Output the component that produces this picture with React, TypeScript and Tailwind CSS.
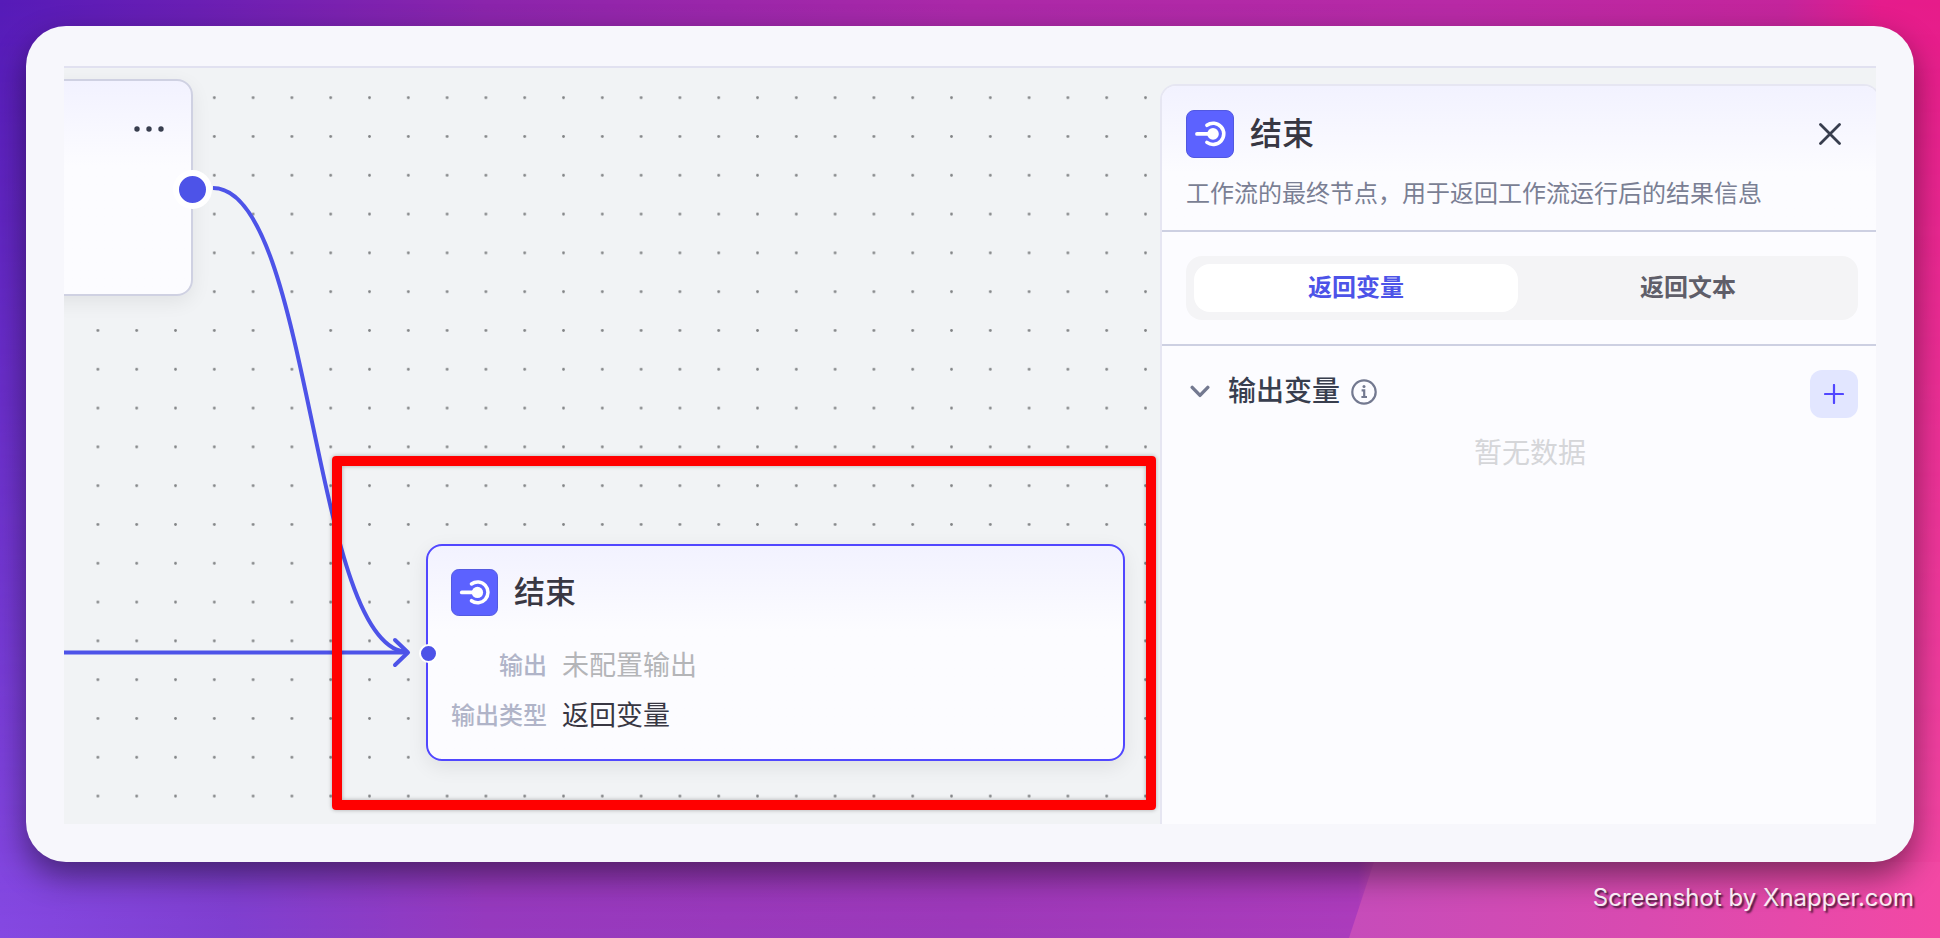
import { useState } from "react";
import clsx from "clsx";

const tabs = ["返回变量", "返回文本"];

const outputs = [
  { label: "输出", value: "未配置输出", empty: true },
  { label: "输出类型", value: "返回变量", empty: false },
];

function EndIcon({ className }: { className: string }) {
  return (
    <svg viewBox="0 0 48 48" className={className} aria-hidden="true">
      <rect x="0.5" y="0.5" width="47" height="47" rx="7.5" fill="#5c62ff" stroke="#5158e0" />
      <path
        d="M20.9 15.3A10.6 10.6 0 1 1 20.9 32.4"
        fill="none"
        stroke="#fff"
        strokeWidth="3.6"
        strokeLinecap="round"
      />
      <path d="M11 23.9H26" stroke="#fff" strokeWidth="3.8" strokeLinecap="round" />
      <circle cx="27" cy="23.9" r="5.8" fill="#fff" />
    </svg>
  );
}

function Backdrop() {
  return (
    <svg
      className="absolute inset-0 h-full w-full"
      viewBox="0 0 1940 938"
      preserveAspectRatio="none"
      aria-hidden="true"
    >
      <defs>
        <linearGradient id="top" x1="0" x2="1" y1="0" y2="0">
          <stop offset="0" stopColor="#561bb8" />
          <stop offset="0.1" stopColor="#6a1fb4" />
          <stop offset="0.25" stopColor="#8b25ac" />
          <stop offset="0.5" stopColor="#ab29a8" />
          <stop offset="0.75" stopColor="#b82aa6" />
          <stop offset="0.92" stopColor="#c4259c" />
          <stop offset="0.97" stopColor="#e51c8c" />
          <stop offset="1" stopColor="#e71c8a" />
        </linearGradient>
        <linearGradient id="bottom" x1="0" x2="1" y1="0" y2="0">
          <stop offset="0" stopColor="#8549e2" />
          <stop offset="0.12" stopColor="#8040d0" />
          <stop offset="0.25" stopColor="#963abe" />
          <stop offset="0.5" stopColor="#9c39ba" />
          <stop offset="0.7" stopColor="#ab3cbc" />
          <stop offset="0.71" stopColor="#c84bb8" />
          <stop offset="0.85" stopColor="#d94ab0" />
          <stop offset="1" stopColor="#f348a4" />
        </linearGradient>
        <linearGradient id="wedge" x1="0" x2="1" y1="0" y2="0">
          <stop offset="0" stopColor="#c64cba" />
          <stop offset="0.5" stopColor="#d94ab0" />
          <stop offset="1" stopColor="#f348a4" />
        </linearGradient>
        <linearGradient id="fade" x1="0" x2="0" y1="0" y2="1">
          <stop offset="0" stopColor="#000" />
          <stop offset="1" stopColor="#fff" />
        </linearGradient>
        <mask id="lower">
          <rect width="1940" height="938" fill="url(#fade)" />
        </mask>
      </defs>
      <rect width="1940" height="938" fill="url(#top)" />
      <rect width="1940" height="938" fill="url(#bottom)" mask="url(#lower)" />
      <path d="M1374 862H1940V938H1349Z" fill="url(#wedge)" />
    </svg>
  );
}

function Edges() {
  return (
    <svg className="absolute inset-0 h-full w-full" aria-hidden="true">
      <defs>
        <pattern id="grid" x="14.5" y="10.3" width="38.8" height="38.8" patternUnits="userSpaceOnUse">
          <circle cx="19.4" cy="19.4" r="1.4" fill="#828486" />
        </pattern>
      </defs>
      <rect width="100%" height="100%" fill="url(#grid)" />
      <g fill="none" stroke="#4d53e8" strokeWidth="4">
        <path d="M149 120C248 120 248 584 344 584" />
        <path d="M0 584.5H343" />
        <path d="M331 572L344 584.5L331 597" strokeLinecap="round" strokeLinejoin="round" />
      </g>
    </svg>
  );
}

function StartNode() {
  return (
    <div className="absolute top-[11px] -left-8 flex h-[217px] w-[161px] justify-end rounded-2xl border-2 border-[#cfd1e2] bg-linear-to-b from-[#f2f2ff] to-[#fcfcff] to-40% px-[26px] pt-[30px] shadow-[0_6px_20px_rgba(0,0,0,0.07)]">
      <button type="button" aria-label="更多" className="h-8 w-8">
        <svg viewBox="0 0 32 32" className="h-8 w-8" fill="#383e4e">
          <circle cx="4" cy="18" r="2.7" />
          <circle cx="16" cy="18" r="2.7" />
          <circle cx="28" cy="18" r="2.7" />
        </svg>
      </button>
      <span className="absolute top-[89px] -right-[21px] h-[39px] w-[39px] rounded-full border-6 border-white bg-[#4d53e8]" />
    </div>
  );
}

function EndNode() {
  return (
    <div className="absolute top-[476px] left-[362px] flex h-[217px] w-[699px] flex-col rounded-2xl border-2 border-[#5147ff] bg-linear-to-b from-[#f2f2ff] to-[#fcfcff] to-40% px-[23px] pt-[23px] shadow-[0_6px_20px_rgba(0,0,0,0.08)]">
      <div className="flex items-center gap-4">
        <EndIcon className="h-[47px] w-[47px]" />
        <h3 className="text-[31px] leading-[46px] font-medium text-[#383743]">结束</h3>
      </div>
      <dl className="mt-[30px] flex flex-col gap-[10px]">
        {outputs.map((row) => (
          <div key={row.label} className="flex h-10 items-center gap-[15px]">
            <dt className="w-24 text-right text-2xl font-medium text-[#b0b4c8]">{row.label}</dt>
            <dd className={clsx("text-[27px] leading-10", row.empty ? "text-[#b4b5b8]" : "text-[#383743]")}>
              {row.value}
            </dd>
          </div>
        ))}
      </dl>
      <span className="absolute top-[98px] -left-[9px] h-[19px] w-[19px] rounded-full border-2 border-white bg-[#4d53e8]" />
    </div>
  );
}

function Panel() {
  const [active, setActive] = useState(tabs[0]);

  return (
    <aside className="z-10 mt-4 -mr-1 w-[720px] shrink-0 rounded-t-2xl border-2 border-b-0 border-[#e6e6f2] bg-[#fcfcff]">
      <header className="rounded-t-[14px] border-b-2 border-[#cdd0e2] bg-linear-to-b from-[#f2f2ff] to-[#fcfcff] to-60% pt-6 pr-5 pb-4 pl-6">
        <div className="flex items-center gap-4">
          <EndIcon className="h-12 w-12" />
          <h2 className="flex-1 text-[32px] leading-[48px] font-medium text-[#383743]">结束</h2>
          <button type="button" aria-label="关闭" className="mr-2 flex h-10 w-10 items-center justify-center">
            <svg viewBox="0 0 22 22" className="h-[22px] w-[22px]" stroke="#383e4e" strokeWidth="2.8" strokeLinecap="round">
              <path d="M1.5 1.5L20.5 20.5M20.5 1.5L1.5 20.5" />
            </svg>
          </button>
        </div>
        <p className="mt-4 text-2xl leading-10 text-[#7a7f94]">
          工作流的最终节点，用于返回工作流运行后的结果信息
        </p>
      </header>

      <div className="border-b-2 border-[#cdd0e2] py-6 pr-5 pl-6">
        <div role="tablist" className="flex gap-2 rounded-2xl bg-[#f4f4f6] p-2">
          {tabs.map((tab) => (
            <button
              key={tab}
              type="button"
              role="tab"
              aria-selected={active === tab}
              onClick={() => setActive(tab)}
              className={clsx(
                "h-12 flex-1 rounded-2xl text-2xl font-bold",
                active === tab ? "bg-white text-[#4d53e8]" : "text-[#5f5e69]"
              )}
            >
              {tab}
            </button>
          ))}
        </div>
      </div>

      <section className="pt-6 pr-5 pl-6">
        <div className="flex items-center justify-between">
          <div className="flex items-center pb-1">
            <button type="button" aria-label="收起" className="flex h-8 w-8 items-center pl-1">
              <svg viewBox="0 0 20 14" className="h-[14px] w-5" fill="none" stroke="#737990" strokeWidth="3.4" strokeLinecap="round" strokeLinejoin="round">
                <path d="M2.2 2.4L10 10.4L17.8 2.4" />
              </svg>
            </button>
            <h3 className="ml-[10px] text-[28px] leading-10 font-medium text-[#383e4e]">输出变量</h3>
            <svg viewBox="0 0 26 26" className="ml-[11px] h-[26px] w-[26px]" fill="none" stroke="#737990" strokeWidth="2.2" aria-hidden="true">
              <circle cx="13" cy="13" r="11.7" />
              <path d="M10.6 11.3H13.2V18M10.4 18H16" />
              <circle cx="13" cy="7.6" r="1.5" fill="#737990" stroke="none" />
            </svg>
          </div>
          <button type="button" aria-label="新增" className="flex h-12 w-12 items-center justify-center rounded-xl bg-[#e2e6ff]">
            <svg viewBox="0 0 20 20" className="h-5 w-5" stroke="#5147ff" strokeWidth="2.2" strokeLinecap="round">
              <path d="M10 1V19M1 10H19" />
            </svg>
          </button>
        </div>
        <p className="mt-4 pl-4 text-center text-[28px] leading-10 text-[#d5d6d9]">暂无数据</p>
      </section>
    </aside>
  );
}

export default function App() {
  return (
    <div className="relative flex min-h-screen flex-col overflow-hidden px-[26px] pt-[26px] font-['Liberation_Sans','Noto_Sans_CJK_SC',sans-serif]">
      <Backdrop />

      <main className="relative flex flex-1 flex-col rounded-[40px] bg-[#f7f7fc] px-[38px] pt-10 pb-[38px] shadow-[0_14px_32px_rgba(0,0,0,0.45)]">
        <div className="relative flex flex-1 overflow-hidden border-t-2 border-[#e1e1f0] bg-[#f1f3f5]">
          <div className="relative min-w-0 flex-1">
            <Edges />
            <StartNode />
            <EndNode />
            <div className="absolute top-[388px] left-[268px] h-[354px] w-[824px] rounded-sm border-10 border-[#ff0000] shadow-[0_0_4px_rgba(0,0,0,0.3),inset_0_0_4px_rgba(0,0,0,0.3)]" />
          </div>
          <Panel />
        </div>
      </main>

      <footer className="relative flex h-[76px] items-center justify-end pb-1">
        <span className="font-['Inter',sans-serif] text-2xl text-white/90 [text-shadow:2px_2px_2px_rgba(0,0,0,0.7)]">
          Screenshot by Xnapper.com
        </span>
      </footer>
    </div>
  );
}
